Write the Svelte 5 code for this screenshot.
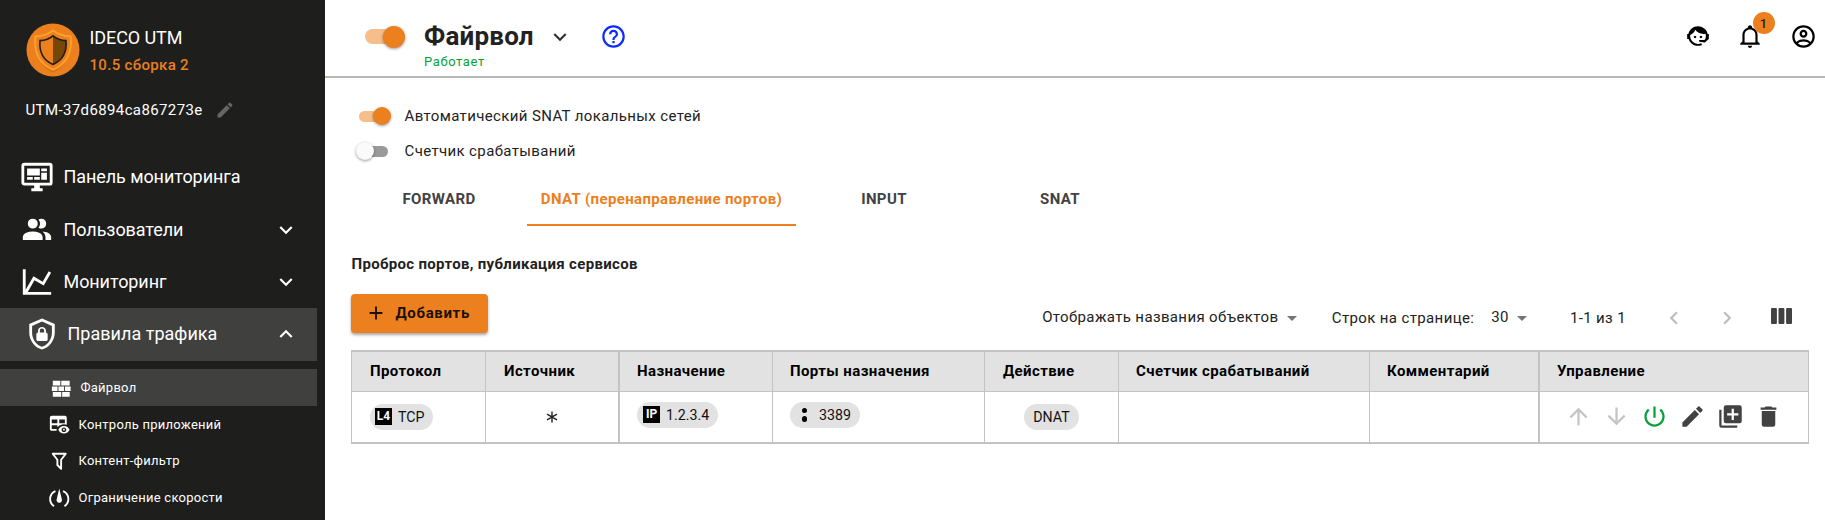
<script>
  const icons = {
    pencil: 'M20.71,7.04C21.1,6.65 21.1,6 20.71,5.63L18.37,3.29C18,2.9 17.35,2.9 16.96,3.29L15.12,5.12L18.87,8.87M3,17.25V21H6.75L17.81,9.93L14.06,6.18L3,17.25Z',
    dashboard: 'M21,16V4H3V16H21M21,2A2,2 0 0,1 23,4V16A2,2 0 0,1 21,18H14V20H16V22H8V20H10V18H3C1.89,18 1,17.1 1,16V4C1,2.89 1.89,2 3,2H21M5,6H14V11H5V6M15,6H19V8H15V6M19,9V14H15V9H19M5,12H9V14H5V12M10,12H14V14H10V12Z',
    users: 'M16 17V19H2V17S2 13 9 13 16 17 16 17M12.5 7.5A3.5 3.5 0 1 0 9 11A3.5 3.5 0 0 0 12.5 7.5M15.94 13A5.32 5.32 0 0 1 18 17V19H22V17S22 13.37 15.94 13M15 4A3.39 3.39 0 0 0 13.07 4.59A5 5 0 0 1 13.07 10.41A3.39 3.39 0 0 0 15 11A3.5 3.5 0 0 0 15 4Z',
    chart: 'M16,11.78L20.24,4.45L21.97,5.45L16.74,14.5L10.23,10.75L5.46,19H22V21H2V3H4V17.54L9.5,8L16,11.78Z',
    shield: 'M21,11C21,16.55 17.16,21.74 12,23C6.84,21.74 3,16.55 3,11V5L12,1L21,5V11M12,21C15.75,20 19,15.54 19,11.22V6.3L12,3.18L5,6.3V11.22C5,15.54 8.25,20 12,21M14.8,11V9.5C14.8,8.1 13.4,7 12,7C10.6,7 9.2,8.1 9.2,9.5V11C8.6,11 8,11.6 8,12.2V15.7C8,16.4 8.6,17 9.2,17H14.7C15.4,17 16,16.4 16,15.8V12.3C16,11.6 15.4,11 14.8,11M13.5,11H10.5V9.5C10.5,8.7 11.2,8.2 12,8.2C12.8,8.2 13.5,8.7 13.5,9.5V11Z',
    wall: 'M3,16H12V21H3V16M2,10H8V15H2V10M9,10H15V15H9V10M16,10H22V15H16V10M13,16H21V21H13V16M3,4H11V9H3V4M12,4H21V9H12V4Z',
    tableEye: 'M17 16.88C17.56 16.88 18 17.32 18 17.88S17.56 18.88 17 18.88 16 18.43 16 17.88 16.44 16.88 17 16.88M17 13.88C19.73 13.88 22.06 15.54 23 17.88C22.06 20.22 19.73 21.88 17 21.88S11.94 20.22 11 17.88C11.94 15.54 14.27 13.88 17 13.88M17 15.38C15.62 15.38 14.5 16.5 14.5 17.88S15.62 20.38 17 20.38 19.5 19.26 19.5 17.88 18.38 15.38 17 15.38M18 3H4C2.9 3 2 3.9 2 5V17C2 18.1 2.9 19 4 19H9.42C9.26 18.68 9.12 18.34 9 18C9.12 17.66 9.26 17.32 9.42 17H4V13H10V15.29C10.56 14.61 11.24 14.04 12 13.57V13H13.11C14.33 12.36 15.72 12 17 12C18.06 12 19.07 12.2 20 12.55V5C20 3.9 19.1 3 18 3M10 11H4V7H10V11M18 11H12V7H18V11Z',
    filter: 'M15,19.88C15.04,20.18 14.94,20.5 14.71,20.71C14.32,21.1 13.69,21.1 13.3,20.71L9.29,16.7C9.06,16.47 8.96,16.16 9,15.87V10.75L4.21,4.62C3.87,4.19 3.95,3.56 4.38,3.22C4.57,3.08 4.78,3 5,3V3H19V3C19.22,3 19.43,3.08 19.62,3.22C20.05,3.56 20.13,4.19 19.79,4.62L15,10.75V19.88M7.04,5L11,10.06V15.58L13,17.58V10.05L16.96,5H7.04Z',
    limit: 'M12,1.5L14.6,12.6A2.9,2.9 0 1,1 9.4,12.6L12,1.5M7.6,3.4L8.3,5.4A8,8 0 0,0 7,19.6L5.8,21.4A10.3,10.3 0 0,1 7.6,3.4M16.4,3.4A10.3,10.3 0 0,1 18.2,21.4L17,19.6A8,8 0 0,0 15.7,5.4L16.4,3.4Z',
    down: 'M7.41,8.58L12,13.17L16.59,8.58L18,10L12,16L6,10L7.41,8.58Z',
    up: 'M7.41,15.41L12,10.83L16.59,15.41L18,14L12,8L6,14L7.41,15.41Z',
    left: 'M15.41,16.58L10.83,12L15.41,7.41L14,6L8,12L14,18L15.41,16.58Z',
    right: 'M8.59,16.58L13.17,12L8.59,7.41L10,6L16,12L10,18L8.59,16.58Z',
    help: 'M11,18H13V16H11V18M12,2A10,10 0 0,0 2,12A10,10 0 0,0 12,22A10,10 0 0,0 22,12A10,10 0 0,0 12,2M12,20C7.59,20 4,16.41 4,12C4,7.59 7.59,4 12,4C16.41,4 20,7.59 20,12C20,16.41 16.41,20 12,20M12,6A4,4 0 0,0 8,10H10A2,2 0 0,1 12,8A2,2 0 0,1 14,10C14,12 11,11.75 11,15H13C13,12.75 16,12.5 16,10A4,4 0 0,0 12,6Z',
    agent: 'M18.72,14.76C19.07,13.91 19.26,13 19.26,12C19.26,11.28 19.15,10.59 18.96,9.95C18.31,10.1 17.63,10.18 16.92,10.18C13.86,10.18 11.15,8.67 9.5,6.34C8.61,8.5 6.91,10.26 4.77,11.22C4.73,11.47 4.73,11.74 4.73,12A7.27,7.27 0 0,0 12,19.27C13.05,19.27 14.06,19.04 14.97,18.63C15.54,19.72 15.8,20.26 15.78,20.26C14.14,20.81 12.87,21.08 12,21.08C9.58,21.08 7.27,20.13 5.57,18.42C4.53,17.38 3.76,16.11 3.33,14.73H2V10.18H3.09C3.93,6.04 7.6,2.92 12,2.92C14.4,2.92 16.71,3.87 18.42,5.58C19.69,6.84 20.54,8.45 20.89,10.18H22V14.73H21.94L18.38,18L13.08,17.4V15.73H17.91L18.72,14.76M9.27,11.77A1.14,1.14 0 1,1 9.26,11.77M14.72,11.77A1.14,1.14 0 1,1 14.71,11.77Z',
    bell: 'M10 21H14C14 22.1 13.1 23 12 23S10 22.1 10 21M21 19V20H3V19L5 17V11C5 7.9 7 5.2 10 4.3V4C10 2.9 10.9 2 12 2S14 2.9 14 4V4.3C17 5.2 19 7.9 19 11V17L21 19M17 11C17 8.2 14.8 6 12 6S7 8.2 7 11V18H17V11Z',
    account: 'M12,2A10,10 0 0,0 2,12A10,10 0 0,0 12,22A10,10 0 0,0 22,12A10,10 0 0,0 12,2M7.07,18.28C7.5,17.38 10.12,16.5 12,16.5C13.88,16.5 16.5,17.38 16.93,18.28C15.57,19.36 13.86,20 12,20C10.14,20 8.43,19.36 7.07,18.28M18.36,16.83C16.93,15.09 13.46,14.5 12,14.5C10.54,14.5 7.07,15.09 5.64,16.83C4.62,15.5 4,13.82 4,12C4,7.59 7.59,4 12,4C16.41,4 20,7.59 20,12C20,13.82 19.38,15.5 18.36,16.83M12,6C10.06,6 8.5,7.56 8.5,9.5C8.5,11.44 10.06,13 12,13C13.94,13 15.5,11.44 15.5,9.5C15.5,7.56 13.94,6 12,6M12,11A1.5,1.5 0 0,1 10.5,9.5A1.5,1.5 0 0,1 12,8A1.5,1.5 0 0,1 13.5,9.5A1.5,1.5 0 0,1 12,11Z',
    plus: 'M19,13H13V19H11V13H5V11H11V5H13V11H19V13Z',
    arrowUp: 'M13,20H11V8L5.5,13.5L4.08,12.08L12,4.16L19.92,12.08L18.5,13.5L13,8V20Z',
    arrowDown: 'M11,4H13V16L18.5,10.5L19.92,11.92L12,19.84L4.08,11.92L5.5,10.5L11,16V4Z',
    power: 'M13 3h-2v10h2V3zm4.83 2.17l-1.42 1.42C17.99 7.86 19 9.81 19 12c0 3.87-3.13 7-7 7s-7-3.13-7-7c0-2.19 1.01-4.14 2.58-5.42L6.17 5.17C4.23 6.82 3 9.26 3 12c0 4.97 4.03 9 9 9s9-4.03 9-9c0-2.74-1.23-5.18-3.17-6.83z',
    copy: 'M19,11H15V15H13V11H9V9H13V5H15V9H19M20,2H8A2,2 0 0,0 6,4V16A2,2 0 0,0 8,18H20A2,2 0 0,0 22,16V4A2,2 0 0,0 20,2M4,6H2V20A2,2 0 0,0 4,22H18V20H4V6Z',
    trash: 'M19,4H15.5L14.5,3H9.5L8.5,4H5V6H19M6,19A2,2 0 0,0 8,21H16A2,2 0 0,0 18,19V7H6V19Z',
  };

  const nav = [
    { icon: 'dashboard', label: 'Панель мониторинга' },
    { icon: 'users', label: 'Пользователи', arrow: 'down' },
    { icon: 'chart', label: 'Мониторинг', arrow: 'down' },
    { icon: 'shield', label: 'Правила трафика', arrow: 'up', active: true },
  ];
  const sub = [
    { icon: 'wall', label: 'Файрвол', active: true },
    { icon: 'tableEye', label: 'Контроль приложений' },
    { icon: 'filter', label: 'Контент-фильтр' },
    { icon: 'limit', label: 'Ограничение скорости' },
  ];
  const tabs = ['FORWARD', 'DNAT (перенаправление портов)', 'INPUT', 'SNAT'];
  const headers = ['Протокол', 'Источник', 'Назначение', 'Порты назначения', 'Действие', 'Счетчик срабатываний', 'Комментарий', 'Управление'];
  const actions = [
    ['arrowUp', 'muted'],
    ['arrowDown', 'muted'],
    ['power', 'green'],
    ['pencil', ''],
    ['copy', ''],
    ['trash', ''],
  ];
  let snat = $state(true);
  let counter = $state(false);
  let tab = $state(1);
</script>

{#snippet icon(name, size)}
  <svg width={size} height={size} viewBox="0 0 24 24" fill="currentColor" aria-hidden="true"><path d={icons[name]} /></svg>
{/snippet}

<div class="app">
  <aside>
    <div class="brand">
      <svg width="54" height="54" viewBox="0 0 54 54" aria-hidden="true">
        <circle cx="27" cy="27" r="26.5" fill="#ec7f1e" />
        <path d="M27 9.500C22 13.500 15.500 15.500 9.500 16C8 31 14 43.500 27 49.500C40 43.500 46 31 44.500 16C38.500 15.500 32 13.500 27 9.500Z" fill="#b85a0c" opacity=".5" />
        <path d="M27 7.500C22 11.300 16 13 9.300 13.500C7.800 29 13.500 41 27 46.800C40.500 41 46.200 29 44.700 13.500C38 13 32 11.300 27 7.500Z" fill="#ec7f1e" stroke="#ffa12b" stroke-width="1.800" />
        <path d="M27 12.800C23.500 15.800 19 17.300 14 17.600C13 29 17.500 37.300 27 41.500Z" fill="#ec7f1e" />
        <path d="M27 12.800C30.500 15.800 35 17.300 40 17.600C41 29 36.500 37.300 27 41.500Z" fill="#774708" />
        <path d="M27 12.800C23.500 15.800 19 17.300 14 17.600C13 29 17.500 37.300 27 41.500C36.500 37.300 41 29 40 17.600C35 17.300 30.500 15.800 27 12.800Z" fill="none" stroke="#1e1e1c" stroke-width="1.600" />
      </svg>
      <div class="names"><b>IDECO UTM</b><span>10.5 сборка 2</span></div>
    </div>
    <div class="host"><span>UTM-37d6894ca867273e</span>{@render icon('pencil', 20)}</div>
    <nav>
      {#each nav as n}
        <div class="item" class:active={n.active}>
          {@render icon(n.icon, 34)}
          <span>{n.label}</span>
          {#if n.arrow}<i>{@render icon(n.arrow, 26)}</i>{/if}
        </div>
      {/each}
      <div class="sub">
        {#each sub as s}
          <div class="subitem" class:active={s.active}>{@render icon(s.icon, 22.5)}<span>{s.label}</span></div>
        {/each}
      </div>
    </nav>
  </aside>

  <main>
    <header>
      <button class="switch big on" aria-label="Файрвол"><i></i></button>
      <div class="title">
        <h1>Файрвол</h1>
        <small>Работает</small>
      </div>
      <span class="chev">{@render icon('down', 26)}</span>
      <span class="help">{@render icon('help', 27)}</span>
      <div class="tools">
        {@render icon('agent', 26)}
        <span class="bell">{@render icon('bell', 26)}<em>1</em></span>
        {@render icon('account', 27)}
      </div>
    </header>

    <div class="content">
      <div class="opt">
        <button class="switch" class:on={snat} aria-label="SNAT" onclick={() => (snat = !snat)}><i></i></button>
        <span>Автоматический SNAT локальных сетей</span>
      </div>
      <div class="opt">
        <button class="switch" class:on={counter} aria-label="Счетчик" onclick={() => (counter = !counter)}><i></i></button>
        <span>Счетчик срабатываний</span>
      </div>

      <div class="tabs">
        {#each tabs as t, k}
          <button class:current={tab === k} onclick={() => (tab = k)}>{t}</button>
        {/each}
      </div>

      <h2>Проброс портов, публикация сервисов</h2>

      <div class="bar">
        <button class="add">{@render icon('plus', 22)}<span>Добавить</span></button>
        <div class="pager">
          <span class="names-select">Отображать названия объектов<i class="caret"></i></span>
          <span class="per">Строк на странице:</span>
          <span class="count">30<i class="caret"></i></span>
          <span class="range">1-1 из 1</span>
          <span class="arrows">{@render icon('left', 26)}{@render icon('right', 26)}</span>
          <svg class="cols" width="21" height="16" viewBox="0 0 21 16" fill="#424242" aria-hidden="true"><rect width="5.900" height="16" rx="1" /><rect x="7.500" width="5.900" height="16" rx="1" /><rect x="15.100" width="5.900" height="16" rx="1" /></svg>
        </div>
      </div>

      <div class="table">
        {#each headers as h}<div class="th">{h}</div>{/each}
        <div class="td"><span class="chip"><b class="tag">L4</b>TCP</span></div>
        <div class="td mid">
          <svg class="star" width="12" height="12" viewBox="0 0 12 12" stroke="#222" stroke-width="1.400" aria-hidden="true"><path d="M6 .5V11.500M1 3.200L11 8.800M11 3.200L1 8.800" /></svg>
        </div>
        <div class="td high"><span class="chip"><b class="tag">IP</b>1.2.3.4</span></div>
        <div class="td high"><span class="chip"><b class="dots"><i></i><i></i></b>3389</span></div>
        <div class="td mid"><span class="chip plain">DNAT</span></div>
        <div class="td"></div>
        <div class="td"></div>
        <div class="td acts">
          {#each actions as a}<button class={a[1]} aria-label={a[0]}>{@render icon(a[0], 27)}</button>{/each}
        </div>
      </div>
    </div>
  </main>
</div>

<style>
  :global(body) { margin: 0; background: #fff; }
  .app, .app * { box-sizing: border-box; }
  .app {
    display: flex; width: 1825px; height: 520px; overflow: hidden;
    font: 400 15px/20px Roboto, sans-serif; letter-spacing: .37px; color: #222;
  }
  svg { display: block; flex: none; }
  button { border: 0; padding: 0; background: none; font: inherit; letter-spacing: inherit; color: inherit; cursor: pointer; }

  aside { width: 325px; flex: none; background: #1e1e1c; color: #fff; overflow: hidden; }
  .brand { display: flex; gap: 9.500px; padding: 23px 0 0 26px; height: 96px; }
  .names { display: flex; flex-direction: column; padding-top: 4px; }
  .names b { font: 400 18px/22px Roboto, sans-serif; letter-spacing: -.08px; }
  .names span { color: #ec7f1e; font-weight: 500; line-height: 20px; margin-top: 6px; letter-spacing: .32px; }
  .host { display: flex; align-items: center; gap: 12.500px; height: 28px; padding-left: 25.500px; letter-spacing: .38px; }
  .host svg { color: #666; }
  nav { padding-top: 27px; }
  .item { display: flex; align-items: center; gap: 9.500px; width: 317px; height: 52.400px; padding: 0 18px 0 20px; font-size: 18px; letter-spacing: -.08px; }
  .item > i { margin-left: auto; }
  .item.active { padding-left: 25px; letter-spacing: .02px; background: #40403f; height: 53px; padding-bottom: 1.500px; gap: 8.500px; }
  .sub { padding-top: 8px; font-size: 13px; letter-spacing: .25px; }
  .subitem { display: flex; align-items: center; gap: 8px; width: 317px; height: 36.600px; padding: 1px 0 0 48px; }
  .subitem.active { padding-left: 50px; background: #40403f; }

  main { flex: 1; min-width: 0; }
  header { display: flex; height: 77.500px; border-bottom: 2px solid #b5b8b5; padding-left: 40px; }
  .switch { position: relative; width: 28px; height: 11px; border-radius: 6px; background: #9a9a9a; flex: none; }
  .switch i { position: absolute; top: -3.500px; left: -4px; width: 18px; height: 18px; border-radius: 50%; background: #fafafa; box-shadow: 0 1px 3px rgba(0, 0, 0, .4); }
  .switch.on { background: #f5be8a; }
  .switch.on i { left: 14px; background: #ec7f1e; }
  .switch.big { width: 38px; height: 15px; border-radius: 8px; margin-top: 29px; }
  .switch.big i { width: 22px; height: 22px; left: 18px; }
  .title { margin-left: 21px; padding-top: 20px; width: 110px; }
  h1 { margin: 0; font: 700 26px/32px Roboto, sans-serif; letter-spacing: .2px; color: #222; }
  small { display: block; font-size: 13px; line-height: 18px; letter-spacing: .6px; color: #05a13a; margin-top: 1px; }
  .chev { margin: 23.500px 0 0 13px; color: #333; }
  .help { margin: 23px 0 0 26.500px; color: #0b2bff; }
  .tools { display: flex; margin: 23px 8px 0 auto; color: #000; }
  .bell { position: relative; margin: 0 27.500px 0 26px; }
  .bell em { position: absolute; left: 16px; top: -11px; width: 22px; height: 22px; border-radius: 50%; background: #ec7f1e; font: 500 13px/23px Roboto, sans-serif; letter-spacing: 0; text-align: center; color: #222; }

  .content { padding: 21px 16px 0 26px; }
  .opt { display: flex; align-items: center; height: 35px; padding-left: 8px; gap: 17.500px; }
  .opt .switch:not(.on) { margin-left: 1px; margin-right: -1px; }
  .tabs { display: flex; height: 57px; }
  .tabs button { width: 176px; font-weight: 700; line-height: 20px; color: #424242; padding-top: 5px; border-bottom: 2px solid transparent; }
  .tabs .current { width: 269px; color: #ec7f1e; border-color: #ec7f1e; }
  h2 { margin: 28px 0 0; font: 700 15px/20px Roboto, sans-serif; letter-spacing: .32px; padding-left: .5px; }
  .bar { display: flex; margin-top: 20px; height: 56px; }
  .add { display: flex; align-items: center; width: 137px; height: 39px; padding-left: 14px; gap: 8.500px; border-radius: 4px; background: #ec7f1e; font-weight: 700; letter-spacing: .65px; color: #1a1100; box-shadow: 0 2px 3px rgba(0, 0, 0, .35); }
  .pager { display: flex; margin-left: auto; }
  .pager > span { display: flex; align-items: center; height: 48px; }
  .pager .names-select, .pager .count { height: 46px; }
  .caret { width: 0; height: 0; border: 5.500px solid transparent; border-bottom: 0; border-top-color: #757575; margin: 3px 0 0 9px; }
  .per { margin-left: 34.500px; }
  .count { margin-left: 17px; }
  .count .caret { margin-left: 8px; }
  .range { margin-left: 43px; }
  .arrows { color: #bdbdbd; margin-left: 35px; gap: 27px; }
  .cols { margin: 14px 17px 0 31px; }

  .table { display: grid; grid-template-columns: 135px 134px 153px 212px 134px 251px 170px 269px; grid-template-rows: 39px 51px; border: solid #c3c3c3; border-width: 2px 0; width: 1458px; }
  .th, .td { display: flex; align-items: center; padding-left: 17px; border-right: 1px solid #c3c3c3; white-space: nowrap; }
  .th { background: #e2e2e2; font-weight: 700; letter-spacing: .4px; color: #000; }
  .td { border-top: 1px solid #c3c3c3; }
  .th:nth-child(8n + 1), .td:nth-child(8n + 1) { border-left: 1px solid #c3c3c3; padding-left: 18px; }
  .th:nth-child(2), .th:nth-child(5) { padding-left: 18px; }
  .th:nth-child(8n + 2), .td:nth-child(8n + 2), .th:nth-child(8n + 7), .td:nth-child(8n + 7) { border-right-width: 2px; }
  .td.mid { justify-content: center; padding: 0; }
  .high { padding-bottom: 4px; }
  .chip { display: flex; align-items: center; height: 26px; padding: 0 9px 0 6px; border-radius: 13px; background: #e2e2e2; font-size: 14.200px; letter-spacing: 0; color: #111; }
  .plain { padding: 0 9.500px; }
  .tag { width: 17px; height: 17px; margin-right: 6px; background: #000; color: #fff; font: 700 12px/17px Roboto, sans-serif; text-align: center; }
  .td:nth-child(8n + 1) .chip { padding-left: 5px; }
  .dots { display: flex; flex-direction: column; align-items: center; gap: 3px; width: 17px; margin-right: 6px; }
  .dots i { width: 5.500px; height: 5.500px; border-radius: 50%; background: #000; }
  .td.acts { padding-left: 25px; gap: 11.100px; color: #424242; }
  .muted { color: #c4c4c4; }
  .green { color: #05a13a; }
</style>
